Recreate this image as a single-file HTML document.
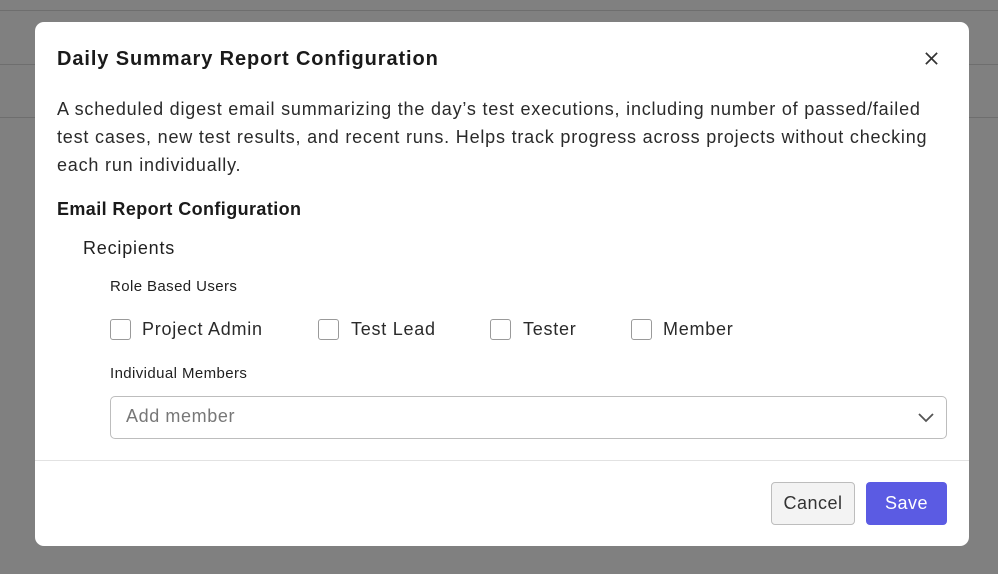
<!DOCTYPE html>
<html><head><style>
*{box-sizing:border-box;margin:0;padding:0}
body{width:998px;height:574px;background:#808080;font-family:"Liberation Sans",sans-serif;position:relative;overflow:hidden;color:#1f1f1f}
.ln{position:absolute;left:0;width:998px;height:1px;background:#6e6e6e}
.modal{position:absolute;left:35px;top:22px;width:934px;height:524px;background:#fff;border-radius:9px}
.a{position:absolute;white-space:nowrap;letter-spacing:0.8px}
.cb{position:absolute;top:319px;width:21px;height:21px;border:1px solid #9a9a9a;border-radius:3px;background:#fff}
.lbl{position:absolute;top:319px;font-size:18px;color:#2a2a2a;letter-spacing:0.75px}
</style></head><body>
<div class="ln" style="top:10px"></div>
<div class="ln" style="top:64px"></div>
<div class="ln" style="top:117px"></div>
<div class="modal"></div>
<div class="a" style="left:57px;top:48px;font-size:20px;font-weight:bold;color:#1a1a1a;letter-spacing:0.9px">Daily Summary Report Configuration</div>
<svg class="a" style="left:924px;top:51px" width="15" height="15" viewBox="0 0 16 16"><path d="M2 2L14 14M14 2L2 14" stroke="#333" stroke-width="1.8" fill="none"/></svg>
<div class="a" style="left:57px;top:95px;font-size:18px;line-height:28px;color:#2a2a2a;white-space:normal;width:885px">A scheduled digest email summarizing the day’s test executions, including number of passed/failed test cases, new test results, and recent runs. Helps track progress across projects without checking each run individually.</div>
<div class="a" style="left:57px;top:199px;font-size:18px;font-weight:bold;color:#1a1a1a;letter-spacing:0.4px">Email Report Configuration</div>
<div class="a" style="left:83px;top:238px;font-size:18px">Recipients</div>
<div class="a" style="left:110px;top:278px;font-size:15px;letter-spacing:0.4px">Role Based Users</div>
<div class="cb" style="left:110px"></div><div class="lbl" style="left:142px">Project Admin</div>
<div class="cb" style="left:318px"></div><div class="lbl" style="left:351px">Test Lead</div>
<div class="cb" style="left:490px"></div><div class="lbl" style="left:523px">Tester</div>
<div class="cb" style="left:631px"></div><div class="lbl" style="left:663px">Member</div>
<div class="a" style="left:110px;top:365px;font-size:15px;letter-spacing:0.4px">Individual Members</div>
<div class="a" style="left:110px;top:396px;width:837px;height:43px;border:1px solid #bdbdbd;border-radius:5px"></div>
<div class="a" style="left:126px;top:406px;font-size:18px;color:#777;letter-spacing:0.6px">Add member</div>
<svg class="a" style="left:917px;top:411px" width="18" height="12" viewBox="0 0 18 12"><path d="M2 3L9 10L16 3" stroke="#555" stroke-width="1.8" fill="none"/></svg>
<div class="a" style="left:35px;top:460px;width:934px;height:1px;background:#e2e2e2"></div>
<div class="a" style="left:771px;top:482px;width:84px;height:43px;background:#f3f3f3;border:1px solid #bdbdbd;border-radius:4px;font-size:18px;color:#333;text-align:center;line-height:41px;letter-spacing:0.5px">Cancel</div>
<div class="a" style="left:866px;top:482px;width:81px;height:43px;background:#5b5be3;border-radius:4px;font-size:18px;color:#fff;text-align:center;line-height:43px;letter-spacing:0.5px">Save</div>
</body></html>
